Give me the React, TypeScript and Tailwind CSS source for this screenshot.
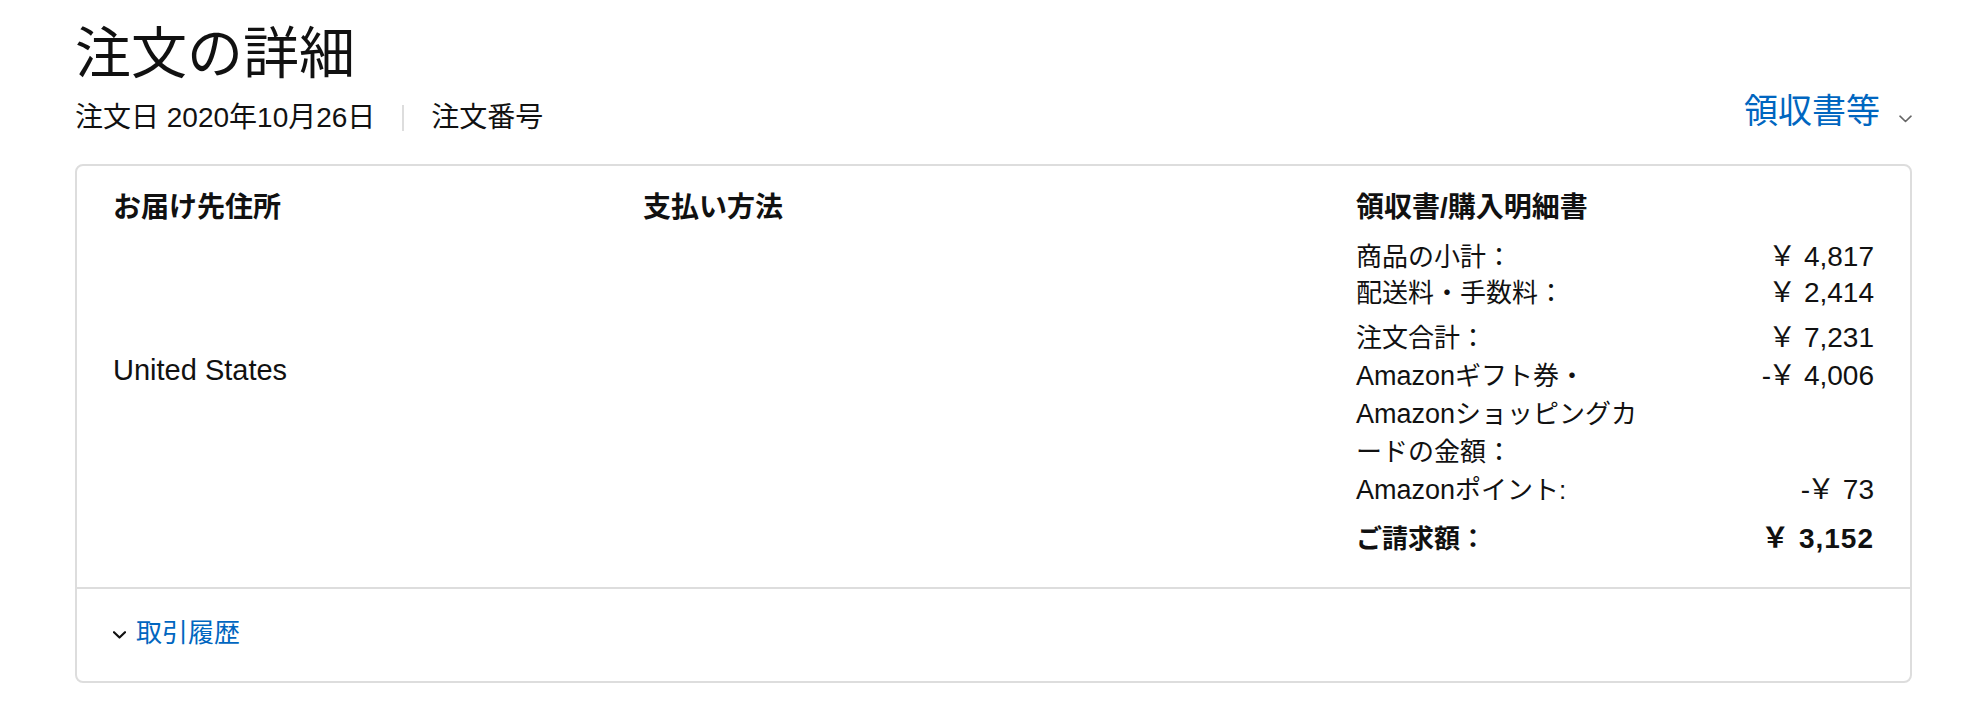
import React from "react";

const FONT = '"Liberation Sans", "Noto Sans CJK JP", sans-serif';

function Chevron({ className, color, width }: { className?: string; color: string; width: number }) {
  return (
    <svg className={className} width="13" height="8" viewBox="0 0 13 8" fill="none">
      <path d="M1 1.2 L6.5 6.5 L12 1.2" stroke={color} strokeWidth={width} strokeLinecap="round" strokeLinejoin="round" />
    </svg>
  );
}

function Row({ label, value, bold, neg }: { label: React.ReactNode; value: string; bold?: boolean; neg?: boolean }) {
  return (
    <div className={`flex items-start justify-between ${bold ? "font-bold" : ""}`}>
      <div className="w-[300px] text-[26px]">{label}</div>
      <div className={`text-right text-[28px] whitespace-nowrap ${bold ? "tracking-[1px]" : ""}`}>
        {neg ? <span className="mr-[-3px]">-</span> : null}
        {value}
      </div>
    </div>
  );
}

export default function App() {
  return (
    <div className="w-[1965px] h-[706px] bg-white text-[#111111] overflow-hidden" style={{ fontFamily: FONT }}>
      <div className="pl-[75px] pr-[53px]">
        <h1 className="pt-[26px] text-[56px] leading-[56px] font-normal">注文の詳細</h1>

        <div className="mt-[9px] flex justify-between items-start">
          <div className="mt-[7px] flex items-center text-[28px] leading-[40px]">
            <span>注文日 2020年10月26日</span>
            <span className="mx-[27px] w-[2px] h-[26px] bg-[#dddddd]" />
            <span>注文番号</span>
          </div>
          <div className="flex items-start">
            <span className="text-[34px] leading-[40px] text-[#0066c0]">領収書等</span>
            <Chevron className="ml-[19px] mt-[24px]" color="#666666" width={1.6} />
          </div>
        </div>

        <div className="mt-[26px] border-2 border-[#dddddd] rounded-[8px]">
          <div className="flex px-[36px] pt-[22px] pb-[29px]">
            <div className="w-[530px]">
              <div className="text-[28px] font-bold leading-[40px]">お届け先住所</div>
              <div className="mt-[123px] text-[29px] leading-[38px]">United States</div>
            </div>
            <div className="w-[713px]">
              <div className="text-[28px] font-bold leading-[40px]">支払い方法</div>
            </div>
            <div className="flex-1">
              <div className="text-[28px] font-bold leading-[40px]">領収書/購入明細書</div>
              <div className="mt-[11px] leading-[36px]">
                <Row label="商品の小計：" value="￥ 4,817" />
                <Row label="配送料・手数料：" value="￥ 2,414" />
              </div>
              <div className="mt-[8px] leading-[38px]">
                <Row label="注文合計：" value="￥ 7,231" />
                <Row
                  label={
                    <>
                      <span className="text-[27px]">Amazon</span>ギフト券・
                      <br />
                      <span className="text-[27px]">Amazon</span>ショッピングカ
                      <br />
                      ードの金額：
                    </>
                  }
                  value="￥ 4,006"
                  neg
                />
                <Row
                  label={
                    <>
                      <span className="text-[27px]">Amazon</span>ポイント:
                    </>
                  }
                  value="￥ 73"
                  neg
                />
              </div>
              <div className="mt-[11px] leading-[38px]">
                <Row label="ご請求額：" value="￥ 3,152" bold />
              </div>
            </div>
          </div>
          <div className="border-t-2 border-[#dddddd] px-[36px] pt-[26px] pb-[30px]">
            <div className="flex items-center">
              <Chevron className="mt-[3px]" color="#111111" width={2.2} />
              <span className="ml-[10px] text-[26px] leading-[36px] text-[#0066c0]">取引履歴</span>
            </div>
          </div>
        </div>
      </div>
    </div>
  );
}
